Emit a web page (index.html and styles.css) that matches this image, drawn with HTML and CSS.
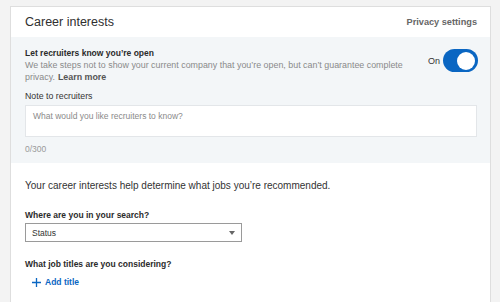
FILE: index.html
```html
<!DOCTYPE html>
<html lang="en">
<head>
    <meta charset="UTF-8">
    <title>Career interests</title>
    <link rel="stylesheet" href="styles.css">
</head>
<body>
    <div class="card">
        <div class="header">
            <div class="title">Career interests</div>
            <div class="privacy">Privacy settings</div>
        </div>

        <div class="open-section">
            <div class="open-row">
                <div class="open-text">
                    <div class="label-bold">Let recruiters know you’re open</div>
                    <div class="desc">We take steps not to show your current company that you’re open, but can’t guarantee complete</div>
                    <div class="desc">privacy.<span class="learn">Learn more</span></div>
                </div>
                <div class="toggle-wrap">
                    <span class="toggle-label">On</span>
                    <span class="toggle"><span class="knob"></span></span>
                </div>
            </div>
            <div class="note-label">Note to recruiters</div>
            <div class="note-box">What would you like recruiters to know?</div>
            <div class="counter">0/300</div>
        </div>

        <div class="interests">
            <p class="intro">Your career interests help determine what jobs you’re recommended.</p>
            <div class="field-label">Where are you in your search?</div>
            <div class="select">
                <span>Status</span>
                <span class="caret"></span>
            </div>
            <div class="field-label titles">What job titles are you considering?</div>
            <div class="add-title">
                <svg width="9" height="9" viewBox="0 0 9 9"><path d="M4.5 0v9M0 4.5h9" stroke="#0a66c2" stroke-width="1.3" fill="none"/></svg>
                <span>Add title</span>
            </div>
        </div>
    </div>
</body>
</html>
```

FILE: styles.css
```css
body {
    margin: 0;
    padding: 6px 9px 0 10px;
    background-color: #f3f3f3;
    font-family: "Liberation Sans", Arial, sans-serif;
    color: #2b2b2b;
    height: 302px;
    box-sizing: border-box;
    overflow: hidden;
}

.card {
    background-color: white;
    border: 1px solid #dedede;
    border-bottom: none;
    height: 100%;
    box-sizing: border-box;
}

.header {
    display: flex;
    justify-content: space-between;
    align-items: center;
    height: 30px;
    padding: 0 13px 0 14px;
}

.header .title {
    font-size: 12.5px;
    color: #2f2f2f;
}

.header .privacy {
    font-size: 9.2px;
    font-weight: bold;
    color: #666;
}

.open-section {
    background-color: #f3f6f8;
    padding: 10px 12px 8px 14px;
}

.open-row {
    display: flex;
    justify-content: space-between;
    align-items: flex-start;
}

.open-text {
    width: 395px;
}

.label-bold {
    font-size: 8.5px;
    font-weight: bold;
    color: #2b2b2b;
    line-height: 12px;
}

.desc {
    font-size: 8.9px;
    color: #8a8a8a;
    line-height: 12px;
    white-space: nowrap;
}

.desc .learn {
    margin-left: 3px;
    font-weight: bold;
    color: #555;
}

.toggle-wrap {
    display: flex;
    align-items: center;
    gap: 3px;
    margin-top: 2px;
}

.toggle-label {
    font-size: 9px;
    color: #333;
}

.toggle {
    display: flex;
    justify-content: flex-end;
    align-items: center;
    width: 35px;
    height: 23px;
    padding: 2px 3px;
    box-sizing: border-box;
    border-radius: 12px;
    background-color: #0a66c2;
}

.knob {
    width: 18px;
    height: 18px;
    border-radius: 50%;
    background-color: white;
}

.note-label {
    margin-top: 7px;
    font-size: 8.8px;
    line-height: 12px;
    color: #333;
}

.note-box {
    margin-top: 3px;
    height: 32px;
    margin-right: 1px;
    box-sizing: border-box;
    border: 1px solid #e3e6e9;
    background-color: white;
    padding: 4px 7px;
    font-size: 8.5px;
    line-height: 12px;
    color: #8a8a8a;
}

.counter {
    margin-top: 6px;
    font-size: 8.5px;
    line-height: 12px;
    color: #9a9a9a;
}

.interests {
    padding: 16px 14px;
}

.intro {
    margin: 0;
    font-size: 10px;
    line-height: 14px;
    color: #333;
}

.field-label {
    margin-top: 16px;
    font-size: 8.5px;
    line-height: 12px;
    font-weight: bold;
    color: #2b2b2b;
}

.select {
    display: flex;
    justify-content: space-between;
    align-items: center;
    width: 217px;
    height: 19px;
    margin-top: 2px;
    padding: 0 6px;
    box-sizing: border-box;
    border: 1px solid #9a9a9a;
    font-size: 8.5px;
    color: #333;
}

.caret {
    width: 0;
    height: 0;
    border-left: 3.5px solid transparent;
    border-right: 3.5px solid transparent;
    border-top: 4px solid #666;
}

.field-label.titles {
    margin-top: 16px;
}

.add-title {
    display: flex;
    align-items: center;
    gap: 4px;
    margin-top: 6px;
    margin-left: 7px;
    font-size: 8.5px;
    line-height: 12px;
    font-weight: bold;
    color: #0a66c2;
}
```
